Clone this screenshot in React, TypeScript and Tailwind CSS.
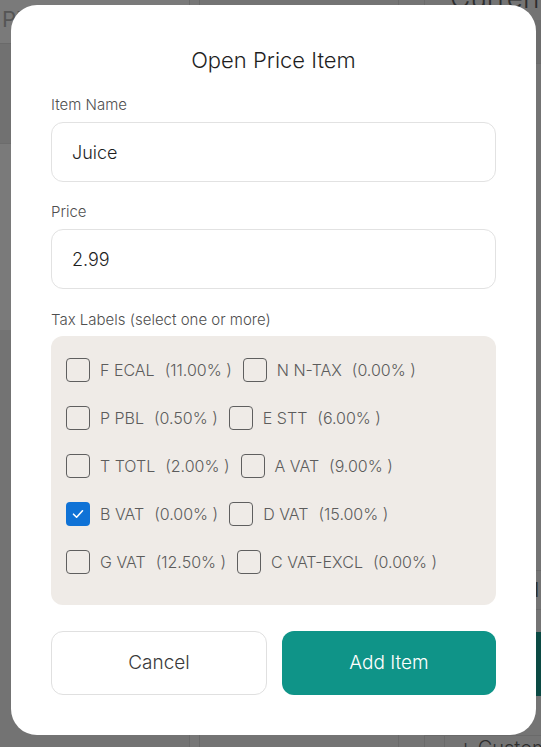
import React, { useState } from "react";

type TaxLabel = { code: string; name: string; rate: string };

const TAX_LABELS: TaxLabel[] = [
  { code: "F", name: "ECAL", rate: "11.00%" },
  { code: "N", name: "N-TAX", rate: "0.00%" },
  { code: "P", name: "PBL", rate: "0.50%" },
  { code: "E", name: "STT", rate: "6.00%" },
  { code: "T", name: "TOTL", rate: "2.00%" },
  { code: "A", name: "VAT", rate: "9.00%" },
  { code: "B", name: "VAT", rate: "0.00%" },
  { code: "D", name: "VAT", rate: "15.00%" },
  { code: "G", name: "VAT", rate: "12.50%" },
  { code: "C", name: "VAT-EXCL", rate: "0.00%" },
];

const font = { fontFamily: "Inter, 'Noto Sans', sans-serif" };

function CheckBox({ checked }: { checked: boolean }) {
  if (checked) {
    return (
      <span className="flex h-6 w-6 shrink-0 items-center justify-center rounded-[4px] bg-[#0f72d6]">
        <svg width="14" height="14" viewBox="0 0 14 14" fill="none">
          <path d="M2.5 7.2 L5.6 10.2 L11.5 3.8" stroke="white" strokeWidth="1.6" strokeLinecap="round" strokeLinejoin="round" />
        </svg>
      </span>
    );
  }
  return <span className="block h-6 w-6 shrink-0 rounded-[4px] border-[1.5px] border-[#5f5f5f]" />;
}

export default function App() {
  const [selected, setSelected] = useState<string[]>(["B-VAT-0.00%"]);

  const toggle = (key: string) =>
    setSelected((s) => (s.includes(key) ? s.filter((k) => k !== key) : [...s, key]));

  return (
    <div className="relative h-[747px] w-[541px] overflow-hidden bg-[#747474]" style={font}>
      {/* dimmed application behind the dialog */}
      <div className="flex h-full w-full">
        <div className="flex w-[190px] shrink-0 flex-col border-r border-[#6a6a6a]">
          <div className="h-[44px] shrink-0 border-b border-[#6a6a6a] bg-[#7a7a7a] pl-[2px] pt-[6px] text-[22px] leading-[26px] text-[#555]">
            Pl
          </div>
          <div className="h-[100px] shrink-0 border-b border-[#6c6c6c] bg-[#717171]" />
          <div className="h-[186px] shrink-0 bg-[#7a7a7a]" />
          <div className="flex-1 bg-[#737373]" />
        </div>
        <div className="w-[10px] shrink-0 border-r border-[#6a6a6a] bg-[#777]" />
        <div className="w-[199px] shrink-0 border-r border-[#6a6a6a]" />
        <div className="w-[26px] shrink-0 border-r border-[#6a6a6a]" />
        <div className="flex min-w-0 flex-1 flex-col">
          <div className="-mt-[24px] h-[44px] shrink-0 pl-[25px] text-[28px] font-light leading-[44px] text-[#2e2e2e] whitespace-nowrap">
            Current Order
          </div>
          <div className="h-[44px] shrink-0 border-b border-[#6a6a6a] bg-[#6d6d6d]" />
          <div className="h-[506px] shrink-0" />
          <div className="h-[40px] shrink-0 border-y border-[#6a6a6a] pr-[2px] text-right text-[20px] leading-[38px] text-[#2e2e2e]">
            Add
          </div>
          <div className="h-[22px] shrink-0" />
          <div className="h-[64px] shrink-0 bg-[#0b4a44]" />
          <div className="h-[40px] shrink-0 border-b border-[#6a6a6a]" />
          <div className="flex shrink-0">
            <div className="w-[20px] shrink-0 border-r border-[#6a6a6a]" />
            <div className="whitespace-nowrap pl-[14px] text-[20px] font-light leading-[24px] text-[#2e2e2e]">+ Customer</div>
          </div>
        </div>
      </div>

      {/* dialog */}
      <div className="absolute left-[11px] top-[5px] w-[525px] rounded-[26px] bg-white px-[40px] pb-[40px] pt-[40px]">
        <h2 className="text-center text-[22px] font-light leading-[30px] text-[#1f1f1f]">Open Price Item</h2>

        <label className="mt-[20px] block text-[15px] font-light leading-[20px] text-[#4f4f4f]">Item Name</label>
        <div className="mt-[7px] flex h-[60px] items-center rounded-[12px] border border-[#e2e2e2] px-[20px] text-[18px] font-light text-[#1f1f1f]">
          Juice
        </div>

        <label className="mt-[20px] block text-[15px] font-light leading-[20px] text-[#4f4f4f]">Price</label>
        <div className="mt-[7px] flex h-[60px] items-center rounded-[12px] border border-[#e2e2e2] px-[20px] text-[18px] font-light text-[#1f1f1f]">
          2.99
        </div>

        <label className="mt-[21px] block text-[15px] font-light leading-[20px] text-[#4f4f4f]">
          Tax Labels (select one or more)
        </label>
        <div className="mt-[6px] flex h-[269px] flex-wrap content-start gap-x-[11px] gap-y-[24px] rounded-[12px] bg-[#efebe7] pl-[15px] pr-[12px] pt-[22px]">
          {TAX_LABELS.map((t) => {
            const key = `${t.code}-${t.name}-${t.rate}`;
            const on = selected.includes(key);
            return (
              <button
                key={key}
                type="button"
                onClick={() => toggle(key)}
                className="flex h-6 items-center gap-[10px] whitespace-nowrap text-[16px] font-light text-[#5c5c5c]"
              >
                <CheckBox checked={on} />
                <span>
                  {t.code} {t.name}
                  <span className="ml-[10px]">({t.rate} )</span>
                </span>
              </button>
            );
          })}
        </div>

        <div className="mt-[26px] flex gap-[15px]">
          <button
            type="button"
            className="h-[64px] flex-1 rounded-[12px] border border-[#e0e0e0] bg-white text-[19px] font-light text-[#3a3a3a]"
          >
            Cancel
          </button>
          <button type="button" className="h-[64px] flex-1 rounded-[12px] bg-[#0f9488] text-[19px] font-light text-white">
            Add Item
          </button>
        </div>
      </div>
    </div>
  );
}
